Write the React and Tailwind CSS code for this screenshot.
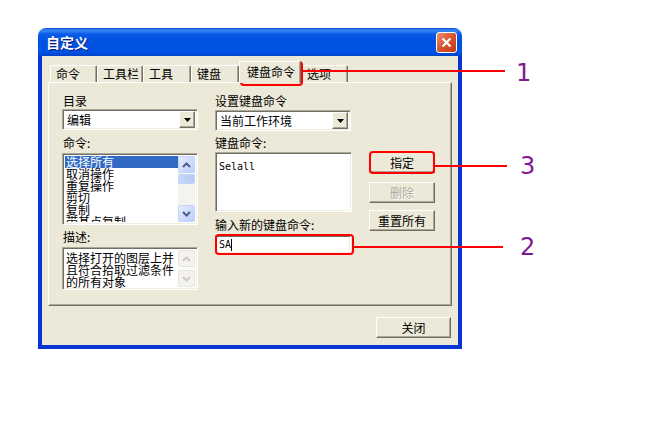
import React from 'react';

const sunken =
  'bg-white border border-t-[#aca899] border-l-[#aca899] border-r-white border-b-white shadow-[inset_1px_1px_0_#716f64,inset_-1px_-1px_0_#f1efe2]';
const raised =
  'bg-[#ece9d8] border border-t-white border-l-white border-r-[#716f64] border-b-[#716f64] shadow-[inset_-1px_-1px_0_#aca899]';

function Chevron({ up, color }) {
  return (
    <svg width="9" height="6" viewBox="0 0 9 6">
      <path
        d={up ? 'M1 5L4.5 1.5L8 5' : 'M1 1L4.5 4.5L8 1'}
        fill="none"
        stroke={color}
        strokeWidth="2"
      />
    </svg>
  );
}

function ScrollBtn({ up, disabled }) {
  return (
    <div
      className={`w-[17px] h-[17px] rounded-[2px] border flex items-center justify-center ${
        disabled
          ? 'bg-[#f4f3ee] border-[#e8e6dc]'
          : 'bg-[linear-gradient(135deg,#e6eefe,#b9cdf9)] border-[#c3d3fd]'
      }`}
    >
      <Chevron up={up} color={disabled ? '#cdcbc0' : '#4d6185'} />
    </div>
  );
}

function Combo({ value }) {
  return (
    <div className={`h-[21px] w-[136px] flex items-center p-[2px] ${sunken}`}>
      <span className="flex-1 pl-[2px] text-[12px] leading-none">{value}</span>
      <div className={`w-[16px] h-[17px] flex items-center justify-center ${raised} shadow-[inset_-1px_-1px_0_#aca899,inset_1px_1px_0_#fff]`}>
        <svg width="7" height="4" viewBox="0 0 7 4">
          <path d="M0 0h7L3.5 4z" fill="#000" />
        </svg>
      </div>
    </div>
  );
}

function Btn({ children, disabled, className }) {
  return (
    <div
      className={`h-[21px] flex items-center justify-center text-[12px] ${raised} ${
        disabled ? 'text-[#aca899] [text-shadow:1px_1px_0_#fff]' : 'text-black'
      } ${className}`}
    >
      {children}
    </div>
  );
}

function Tab({ label, w, active }) {
  if (active) {
    return (
      <div
        className={`${w} h-[22px] -mb-[1px] relative z-10 bg-[#ece9d8] rounded-t-[2px] border-t border-l border-t-white border-l-white border-r border-r-[#716f64] shadow-[inset_-1px_0_0_#aca899] flex items-center pl-[7px] pb-[2px] text-[12px]`}
      >
        {label}
      </div>
    );
  }
  return (
    <div
      className={`${w} h-[17px] rounded-t-[2px] border-t border-l border-t-white border-l-white border-r border-r-[#716f64] shadow-[inset_-1px_0_0_#aca899] flex items-center pl-[5px] text-[12px]`}
    >
      {label}
    </div>
  );
}

const commands = ['选择所有', '取消操作', '重复操作', '剪切', '复制', '带基点复制'];

export default function App() {
  return (
    <div className="relative w-[667px] h-[426px] bg-white overflow-hidden pt-[28px] pl-[38px] font-['Noto_Sans_CJK_SC','Noto_Sans',sans-serif] text-black">
      {/* window */}
      <div className="w-[424px] rounded-t-[8px] overflow-hidden">
        <div className="h-[28px] flex items-center justify-between pl-[8px] pr-[5px] bg-[linear-gradient(to_bottom,#0a4fd6_0%,#3a87f5_9%,#0a5ae8_22%,#0050de_50%,#0053e6_85%,#0042c8_100%)]">
          <span className="text-white font-bold text-[14px] [text-shadow:1px_1px_0_#0a1a80]">自定义</span>
          <div className="w-[21px] h-[21px] rounded-[3px] border border-white bg-[linear-gradient(135deg,#f09070,#d9532d_50%,#c03a16)] flex items-center justify-center">
            <svg width="11" height="11" viewBox="0 0 11 11">
              <path d="M1.5 1.5L9.5 9.5M9.5 1.5L1.5 9.5" stroke="#fff" strokeWidth="2.2" />
            </svg>
          </div>
        </div>

        <div className="h-[293px] bg-[#ece9d8] border-x-4 border-b-4 border-[#0836d2]">
          {/* tabs */}
          <div className="h-[26px] flex items-end pl-[8px]">
            <Tab label="命令" w="w-[47px]" />
            <Tab label="工具栏" w="w-[46px]" />
            <Tab label="工具" w="w-[48px]" />
            <Tab label="键盘" w="w-[48px]" />
            <Tab label="键盘命令" w="w-[62px]" active />
            <Tab label="选项" w="w-[47px]" />
          </div>

          {/* tab page */}
          <div className="ml-[6px] w-[404px] h-[224px] border border-t-white border-l-white border-r-[#716f64] border-b-[#716f64] shadow-[inset_-1px_-1px_0_#aca899] flex pl-[13px] pt-[11px] text-[12px]">
            <div className="w-[136px] flex flex-col">
              <div className="h-[14px] leading-[14px] pl-[1px]">目录</div>
              <div className="mt-[1px]">
                <Combo value="编辑" />
              </div>
              <div className="mt-[6px] h-[14px] leading-[14px] pl-[1px]">命令:</div>
              <div className={`mt-[3px] h-[72px] w-[136px] flex p-[2px] overflow-hidden ${sunken}`}>
                <div className="flex-1 overflow-hidden leading-[12px]">
                  {commands.map((c, i) => (
                    <div
                      key={c}
                      className={`h-[12px] pl-[1px] whitespace-nowrap ${i === 0 ? 'bg-[#316ac5] text-white' : ''}`}
                    >
                      {c}
                    </div>
                  ))}
                </div>
                <div className="w-[17px] flex flex-col bg-[#f4f3ee]">
                  <ScrollBtn up />
                  <div className="mt-[1px] h-[10px] rounded-[2px] border border-[#c3d3fd] bg-[linear-gradient(to_right,#c9d8fc,#b5c9f7)]" />
                  <div className="flex-1" />
                  <ScrollBtn />
                </div>
              </div>
              <div className="mt-[5px] h-[14px] leading-[14px] pl-[1px]">描述:</div>
              <div className={`mt-[3px] h-[43px] w-[136px] flex p-[2px] overflow-hidden ${sunken}`}>
                <div className="flex-1 leading-[12px] pl-[1px] pt-[2px]">
                  选择打开的图层上并
                  <br />
                  且符合拾取过滤条件
                  <br />
                  的所有对象
                </div>
                <div className="w-[17px] flex flex-col justify-between bg-[#fbfbf8]">
                  <ScrollBtn up disabled />
                  <ScrollBtn disabled />
                </div>
              </div>
            </div>

            <div className="ml-[17px] w-[137px] flex flex-col">
              <div className="h-[14px] leading-[14px]">设置键盘命令</div>
              <div className="mt-[2px]">
                <Combo value="当前工作环境" />
              </div>
              <div className="mt-[5px] h-[14px] leading-[14px]">键盘命令:</div>
              <div className={`mt-[2px] h-[60px] w-[137px] p-[3px] ${sunken}`}>
                <span className="font-['DejaVu_Sans_Mono',monospace] text-[10px] leading-[12px]">Selall</span>
              </div>
              <div className="mt-[6px] h-[14px] leading-[14px]">输入新的键盘命令:</div>
              <div className={`mt-[3px] h-[19px] w-[136px] flex items-center pl-[3px] ${sunken}`}>
                <span className="font-['DejaVu_Sans_Mono',monospace] text-[10px] leading-none">SA</span>
                <span className="w-[1px] h-[12px] bg-black" />
              </div>
            </div>

            <div className="ml-[17px] w-[66px] flex flex-col">
              <Btn className="mt-[58px]">指定</Btn>
              <Btn className="mt-[9px]" disabled>
                删除
              </Btn>
              <Btn className="mt-[7px]">重置所有</Btn>
            </div>
          </div>

          <div className="flex justify-end pr-[7px] mt-[11px]">
            <Btn className="w-[75px]">关闭</Btn>
          </div>
        </div>
      </div>

      {/* annotations */}
      <div className="absolute left-[240px] top-[61px] w-[63px] h-[25px] border-2 border-[#ff0000] rounded-[4px]" />
      <div className="absolute left-[303px] top-[70px] w-[202px] h-[2px] bg-[#ff0000]" />
      <div className="absolute left-[516px] top-[61px] font-['DejaVu_Sans',sans-serif] text-[24px] leading-[24px] text-[#82188f]">1</div>

      <div className="absolute left-[369px] top-[151px] w-[66px] h-[23px] border-2 border-[#ff0000] rounded-[4px]" />
      <div className="absolute left-[435px] top-[165px] w-[72px] h-[2px] bg-[#ff0000]" />
      <div className="absolute left-[520px] top-[154px] font-['DejaVu_Sans',sans-serif] text-[24px] leading-[24px] text-[#82188f]">3</div>

      <div className="absolute left-[215px] top-[234px] w-[139px] h-[21px] border-2 border-[#ff0000] rounded-[4px]" />
      <div className="absolute left-[354px] top-[246px] w-[149px] h-[2px] bg-[#ff0000]" />
      <div className="absolute left-[520px] top-[235px] font-['DejaVu_Sans',sans-serif] text-[24px] leading-[24px] text-[#82188f]">2</div>
    </div>
  );
}
